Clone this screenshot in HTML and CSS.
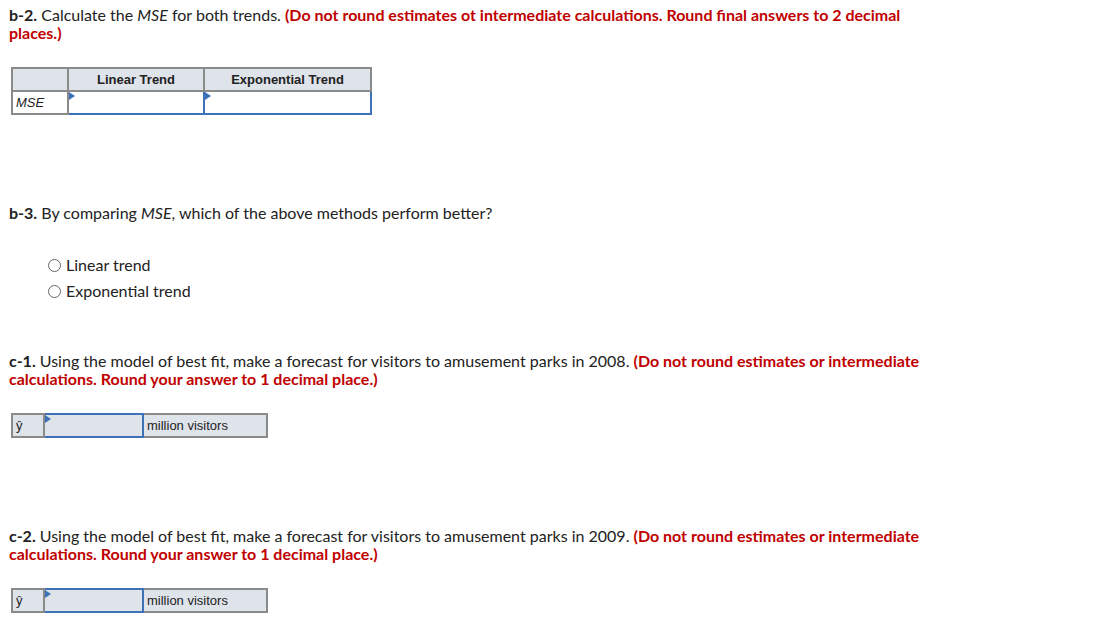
FILE: index.html
```html
<!DOCTYPE html>
<html>
<head>
<meta charset="utf-8">
<link rel="stylesheet" href="styles.css">
</head>
<body>
<div class="page">
  <section class="part part-b2">
    <p class="q"><b>b-2.</b> Calculate the <i>MSE</i> for both trends. <span class="red">(Do not round estimates ot intermediate calculations. Round final answers to 2 decimal places.)</span></p>
    <table class="grid mse">
      <tr class="head">
        <th class="c0"></th>
        <th class="c1">Linear Trend</th>
        <th class="c2">Exponential Trend</th>
      </tr>
      <tr>
        <td class="lbl"><i>MSE</i></td>
        <td class="inp white"><span class="flag"></span></td>
        <td class="inp white"><span class="flag"></span></td>
      </tr>
    </table>
  </section>

  <section class="part part-b3">
    <p class="q"><b>b-3.</b> By comparing <i>MSE</i>, which of the above methods perform better?</p>
    <div class="radios">
      <label class="radio"><span class="circle"></span>Linear trend</label>
      <label class="radio"><span class="circle"></span>Exponential trend</label>
    </div>
  </section>

  <section class="part part-c1">
    <p class="q"><b>c-1.</b> Using the model of best fit, make a forecast for visitors to amusement parks in 2008. <span class="red">(Do not round estimates or intermediate calculations. Round your answer to 1 decimal place.)</span></p>
    <table class="grid yhat">
      <tr>
        <td class="y">ŷ</td>
        <td class="inp"><span class="flag"></span></td>
        <td class="unit">million visitors</td>
      </tr>
    </table>
  </section>

  <section class="part part-c2">
    <p class="q"><b>c-2.</b> Using the model of best fit, make a forecast for visitors to amusement parks in 2009. <span class="red">(Do not round estimates or intermediate calculations. Round your answer to 1 decimal place.)</span></p>
    <table class="grid yhat">
      <tr>
        <td class="y">ŷ</td>
        <td class="inp"><span class="flag"></span></td>
        <td class="unit">million visitors</td>
      </tr>
    </table>
  </section>
</div>
</body>
</html>
```

FILE: styles.css
```css
html, body {
  margin: 0;
  padding: 0;
  background: #ffffff;
}
.page {
  padding: 6px 0 0 9px;
  width: 918px;
  font-family: Lato, "Open Sans", sans-serif;
  font-size: 16px;
  color: #222222;
}
.q {
  margin: 0;
  line-height: 18px;
}
.q b { font-weight: 700; }
.red {
  color: #c00000;
  font-weight: 700;
}
.grid {
  border-collapse: collapse;
  font-family: "Liberation Sans", Arial, sans-serif;
  font-size: 13px;
  color: #222;
}
.grid th, .grid td {
  border: 2px solid #8a8a8a;
  padding: 0;
  height: 21px;
}
.mse {
  margin: 25px 0 0 2px;
}
.mse th {
  background: #dfe3ea;
  font-weight: 700;
  text-align: center;
}
.mse .c0 { width: 54px; }
.mse .c1 { width: 134px; }
.mse .c2 { width: 165px; }
.mse .lbl {
  padding-left: 3px;
  text-align: left;
}
.inp {
  position: relative;
  border: 2px solid #3d72b8 !important;
  background: #dfe3ea;
}
.inp.white { background: #ffffff; }
.flag {
  position: absolute;
  left: 0;
  top: 0;
  width: 0;
  height: 0;
  border-top: 4px solid transparent;
  border-bottom: 4px solid transparent;
  border-left: 6px solid #3d72b8;
}
.part-b3 { margin-top: 89px; }
.radios {
  margin: 34px 0 0 39px;
  display: flex;
  flex-direction: column;
  gap: 8px;
}
.radio {
  display: flex;
  align-items: center;
  gap: 5px;
  line-height: 18px;
}
.circle {
  width: 11px;
  height: 11px;
  border: 1px solid #666;
  border-radius: 50%;
  background: #fff;
}
.part-c1 { margin-top: 52px; }
.part-c2 { margin-top: 89px; }
.yhat {
  margin: 25px 0 0 2px;
  background: #dfe3ea;
}
.yhat td { height: 21px; }
.yhat .y { width: 27px; padding-left: 3px; }
.yhat .inp { width: 97px; }
.yhat .unit { width: 119px; padding-left: 3px; }
```
